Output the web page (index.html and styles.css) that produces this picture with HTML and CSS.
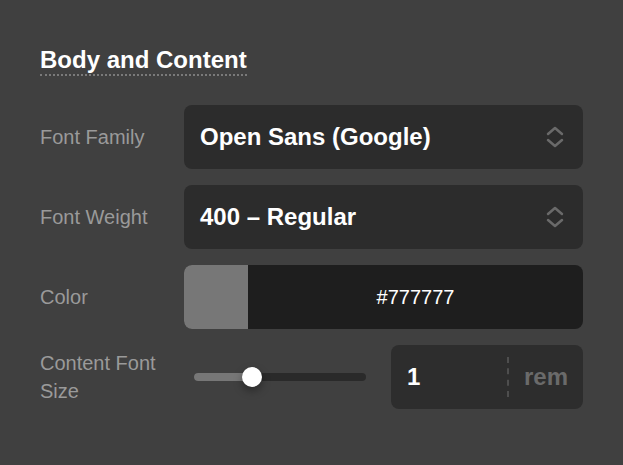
FILE: index.html
```html
<!DOCTYPE html>
<html lang="en">
<head>
<meta charset="utf-8">
<title>Body and Content</title>
<link rel="stylesheet" href="styles.css">
</head>
<body>
<section class="panel">
  <h2 class="panel-title">Body and Content</h2>
  <div class="form-grid">
    <label class="field-label">Font Family</label>
    <div class="select">
      <span class="select-value">Open Sans (Google)</span>
      <svg class="chevrons" width="18" height="22" viewBox="0 0 18 22" aria-hidden="true">
        <path d="M2 8 L9 2 L16 8" fill="none" stroke="#6a6a6a" stroke-width="2.5" stroke-linecap="round" stroke-linejoin="round"/>
        <path d="M2 14 L9 20 L16 14" fill="none" stroke="#6a6a6a" stroke-width="2.5" stroke-linecap="round" stroke-linejoin="round"/>
      </svg>
    </div>

    <label class="field-label">Font Weight</label>
    <div class="select">
      <span class="select-value">400 – Regular</span>
      <svg class="chevrons" width="18" height="22" viewBox="0 0 18 22" aria-hidden="true">
        <path d="M2 8 L9 2 L16 8" fill="none" stroke="#6a6a6a" stroke-width="2.5" stroke-linecap="round" stroke-linejoin="round"/>
        <path d="M2 14 L9 20 L16 14" fill="none" stroke="#6a6a6a" stroke-width="2.5" stroke-linecap="round" stroke-linejoin="round"/>
      </svg>
    </div>

    <label class="field-label">Color</label>
    <div class="color-input">
      <span class="swatch"></span>
      <span class="hex">#777777</span>
    </div>

    <label class="field-label">Content Font Size</label>
    <div class="size-control">
      <div class="slider">
        <div class="track"><div class="fill"></div></div>
        <div class="knob"></div>
      </div>
      <div class="number-box">
        <span class="number-value">1</span>
        <span class="unit">rem</span>
      </div>
    </div>
  </div>
</section>
</body>
</html>
```

FILE: styles.css
```css
html, body {
  margin: 0;
  padding: 0;
  background: #404040;
}

body {
  font-family: "Liberation Sans", Arial, sans-serif;
  width: 623px;
  height: 465px;
  overflow: hidden;
}

.panel {
  padding: 46px 40px 40px 40px;
}

.panel-title {
  display: inline-block;
  margin: 0 0 29px 0;
  padding: 0 0 1px 0;
  font-size: 24px;
  font-weight: bold;
  line-height: 27px;
  color: #ffffff;
  border-bottom: 2px dotted #7a7a7a;
}

.form-grid {
  display: grid;
  grid-template-columns: 144px 1fr;
  row-gap: 16px;
  align-items: center;
}

.field-label {
  font-size: 20px;
  line-height: 28px;
  color: #9a9a9a;
}

.select {
  height: 64px;
  box-sizing: border-box;
  background: #2c2c2c;
  border-radius: 8px;
  display: flex;
  align-items: center;
  justify-content: space-between;
  padding: 0 19px 0 16px;
}

.select-value {
  font-size: 24px;
  font-weight: bold;
  color: #ffffff;
}

.chevrons {
  display: block;
  flex-shrink: 0;
  width: 18px;
  height: 22px;
}

.color-input {
  height: 64px;
  display: flex;
  border-radius: 8px;
  overflow: hidden;
  background: #1e1e1e;
}

.swatch {
  width: 64px;
  background: #777777;
}

.hex {
  flex: 1;
  display: flex;
  align-items: center;
  justify-content: center;
  font-size: 20px;
  color: #ffffff;
}

.size-control {
  display: flex;
  align-items: center;
  gap: 25px;
}

.slider {
  position: relative;
  flex: 1;
  margin-left: 10px;
  height: 20px;
  display: flex;
  align-items: center;
}

.track {
  width: 100%;
  height: 8px;
  border-radius: 4px;
  background: #2a2a2a;
  overflow: hidden;
}

.fill {
  width: 52px;
  height: 100%;
  background: #777777;
}

.knob {
  position: absolute;
  left: 48px;
  top: 0;
  width: 20px;
  height: 20px;
  border-radius: 50%;
  background: #ffffff;
  box-shadow: 0 4px 8px rgba(0, 0, 0, 0.35);
}

.number-box {
  width: 192px;
  height: 64px;
  box-sizing: border-box;
  background: #2d2d2d;
  border-radius: 8px;
  display: flex;
  align-items: center;
  padding: 0 15px 0 16px;
}

.number-value {
  flex: 1;
  font-size: 24px;
  font-weight: bold;
  color: #ffffff;
}

.unit {
  height: 40px;
  line-height: 40px;
  border-left: 2px dashed #4e4e4e;
  padding-left: 15px;
  font-size: 24px;
  font-weight: bold;
  color: #6a6a6a;
}
```
